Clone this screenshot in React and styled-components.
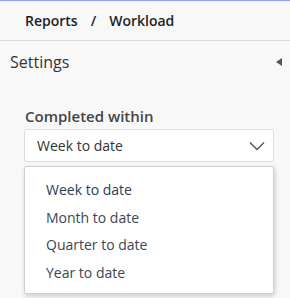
import React, { useState } from "react";
import styled, { createGlobalStyle } from "styled-components";

const GlobalStyle = createGlobalStyle`
  body {
    margin: 0;
    background: #f8f8f8;
    font-family: "Open Sans", "Liberation Sans", sans-serif;
    color: #333;
  }
`;

const Page = styled.div`
  width: 290px;
  height: 298px;
  border-top: 1px solid #8c9ef2;
  box-sizing: border-box;
`;

const Breadcrumb = styled.div`
  height: 39px;
  display: flex;
  align-items: center;
  gap: 13px;
  padding-left: 25px;
  border-bottom: 1px solid #dcdcdc;
  font-size: 14px;
  font-weight: 600;
  color: #1f1f1f;
`;

const SettingsHeader = styled.div`
  display: flex;
  align-items: center;
  justify-content: space-between;
  padding: 10px 8px 0 10px;
  height: 22px;
`;

const Title = styled.span`
  font-size: 16px;
  color: #333;
`;

const Collapse = styled.span`
  width: 0;
  height: 0;
  border-top: 4px solid transparent;
  border-bottom: 4px solid transparent;
  border-right: 6px solid #555;
`;

const Field = styled.div`
  padding: 33px 16px 0 24px;
`;

const Label = styled.div`
  font-size: 15px;
  font-weight: 600;
  color: #444;
  line-height: 20px;
  margin-bottom: 3px;
  padding-left: 1px;
`;

const Select = styled.div`
  height: 33px;
  box-sizing: border-box;
  background: #fff;
  border: 1px solid #dedede;
  border-radius: 3px;
  display: flex;
  align-items: center;
  justify-content: space-between;
  padding: 0 8px 0 12px;
  font-size: 14px;
  color: #333;
`;

const Menu = styled.ul`
  list-style: none;
  margin: 4px 0 0;
  padding: 9px 0 7px;
  background: #fff;
  border: 1px solid #d0d0d0;
  border-radius: 2px;
  box-shadow: 1px 2px 5px rgba(0, 0, 0, 0.18);
`;

const Option = styled.li`
  font-size: 14px;
  line-height: 27.5px;
  padding-left: 21px;
  color: ${(p) => (p.selected ? "#2c3e50" : "#3a4652")};
`;

const options = ["Week to date", "Month to date", "Quarter to date", "Year to date"];

const App = () => {
  const [value] = useState(options[0]);

  return (
    <Page>
      <GlobalStyle />
      <Breadcrumb>
        <span>Reports</span>
        <span>/</span>
        <span>Workload</span>
      </Breadcrumb>
      <SettingsHeader>
        <Title>Settings</Title>
        <Collapse />
      </SettingsHeader>
      <Field>
        <Label>Completed within</Label>
        <Select>
          <span>{value}</span>
          <svg width="16" height="10" viewBox="0 0 16 10">
            <path d="M1 1.5 L8 8.5 L15 1.5" fill="none" stroke="#555" strokeWidth="1.4" />
          </svg>
        </Select>
        <Menu>
          {options.map((o) => (
            <Option key={o} selected={o === value}>
              {o}
            </Option>
          ))}
        </Menu>
      </Field>
    </Page>
  );
};

export default App;
